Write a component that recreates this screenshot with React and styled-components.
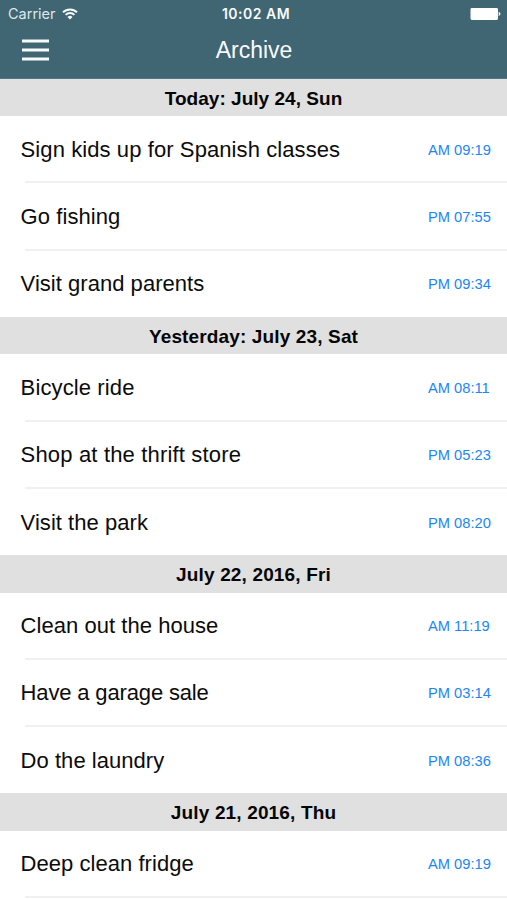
import React from 'react';
import styled, { createGlobalStyle } from 'styled-components';

const GlobalStyle = createGlobalStyle`
  * { box-sizing: border-box; }
  body { margin: 0; background: #fff; overflow: hidden; }
`;

const Screen = styled.main`
  width: 507px;
  height: 900px;
  overflow: hidden;
  background: #fff;
  color: #0b0b0b;
  font-family: "Liberation Sans", Arial, sans-serif;
`;

const TopBar = styled.header`
  height: 79px;
  background: #406573;
  color: #f8fbfc;
  border-bottom: 1px solid #54788a;
`;

const StatusBar = styled.div`
  height: 27px;
  display: grid;
  grid-template-columns: 1fr auto 1fr;
  align-items: center;
  padding: 0 6px 0 8px;
`;

const Carrier = styled.div`
  display: flex;
  align-items: center;
  gap: 6px;
  font: 14.5px/27px Inter, sans-serif;
  letter-spacing: 0;
  color: #dce8ec;
`;

const Clock = styled.time`
  padding-left: 3px;
  font: 600 14px/27px Inter, sans-serif;
  letter-spacing: 0.5px;
`;

const Battery = styled.svg`
  justify-self: end;
`;

const NavBar = styled.div`
  height: 46px;
  display: grid;
  grid-template-columns: 70px 1fr 70px;
  align-items: center;
`;

const MenuButton = styled.button`
  width: 70px;
  height: 46px;
  padding: 0 0 0 22px;
  border: 0;
  background: none;
  display: flex;
  align-items: center;
`;

const Title = styled.h1`
  margin: 0;
  padding-left: 1px;
  text-align: center;
  font-size: 23px;
  font-weight: 400;
  line-height: 46px;
`;

const SectionHeader = styled.h2`
  height: 37.2px;
  margin: 0;
  background: #e0e0e0;
  color: #050505;
  text-align: center;
  font-size: 19px;
  font-weight: 700;
  line-height: 39px;
  letter-spacing: ${p => p.$tracking || 0}px;
`;

const Rows = styled.ul`
  margin: 0;
  padding: 0;
  list-style: none;
`;

const Row = styled.li`
  height: ${p => (p.$last ? 66.6 : 67.2)}px;
  display: flex;
  align-items: center;
  justify-content: space-between;
  padding: ${p => (p.$last ? 1 : 0.4)}px 16px 0 20.6px;
  background: linear-gradient(#f0f0f0, #f0f0f0) 25px 100% / 100% ${p => (p.$last ? 0 : 2)}px no-repeat;
`;

const Task = styled.span`
  font-size: 22px;
  line-height: 28px;
  letter-spacing: ${p => p.$tracking || 0}px;
`;

const Time = styled.time`
  width: 63px;
  font-size: 14.7px;
  line-height: 20px;
  white-space: nowrap;
  color: #2086f7;
`;

const sections = [
  {
    title: 'Today: July 24, Sun',
    tracking: 0.03,
    items: [
      ['Sign kids up for Spanish classes', 'AM 09:19', 0.09],
      ['Go fishing', 'PM 07:55', 0.07],
      ['Visit grand parents', 'PM 09:34', 0.03],
    ],
  },
  {
    title: 'Yesterday: July 23, Sat',
    tracking: 0.14,
    items: [
      ['Bicycle ride', 'AM 08:11', 0.12],
      ['Shop at the thrift store', 'PM 05:23', 0.17],
      ['Visit the park', 'PM 08:20', 0.04],
    ],
  },
  {
    title: 'July 22, 2016, Fri',
    tracking: 0.15,
    items: [
      ['Clean out the house', 'AM 11:19', 0.04],
      ['Have a garage sale', 'PM 03:14', -0.15],
      ['Do the laundry', 'PM 08:36', 0.04],
    ],
  },
  {
    title: 'July 21, 2016, Thu',
    tracking: 0.15,
    items: [['Deep clean fridge', 'AM 09:19', 0.04]],
    more: true,
  },
];

const WifiIcon = () => (
  <svg width="16" height="12" viewBox="0 0 16 12" fill="none" stroke="#f8fbfc" strokeWidth="1.9">
    <path d="M1 4.3a10 10 0 0 1 14 0M3.6 6.9a6.2 6.2 0 0 1 8.8 0" />
    <path d="M8 11.4 5.5 8.9a3.6 3.6 0 0 1 5 0z" fill="#f8fbfc" stroke="none" />
  </svg>
);

export default function App() {
  return (
    <Screen>
      <GlobalStyle />
      <TopBar>
        <StatusBar>
          <Carrier>Carrier<WifiIcon /></Carrier>
          <Clock>10:02 AM</Clock>
          <Battery width="31" height="12" viewBox="0 0 31 12" fill="#fff">
            <rect x="0.5" width="27.5" height="12" rx="1.4" />
            <path d="M28.7 4.1c2.3.5 2.3 3.3 0 3.8z" />
          </Battery>
        </StatusBar>
        <NavBar>
          <MenuButton aria-label="Menu">
            <svg width="27" height="22" viewBox="0 0 27 22" fill="#f8fbfc">
              <rect y="0.5" width="27" height="3" />
              <rect y="9.5" width="27" height="3" />
              <rect y="18.5" width="27" height="3" />
            </svg>
          </MenuButton>
          <Title>Archive</Title>
        </NavBar>
      </TopBar>
      {sections.map(section => (
        <section key={section.title}>
          <SectionHeader $tracking={section.tracking}>{section.title}</SectionHeader>
          <Rows>
            {section.items.map(([task, time, tracking], i) => (
              <Row key={task} $last={!section.more && i === section.items.length - 1}>
                <Task $tracking={tracking}>{task}</Task>
                <Time>{time}</Time>
              </Row>
            ))}
          </Rows>
        </section>
      ))}
    </Screen>
  );
}
